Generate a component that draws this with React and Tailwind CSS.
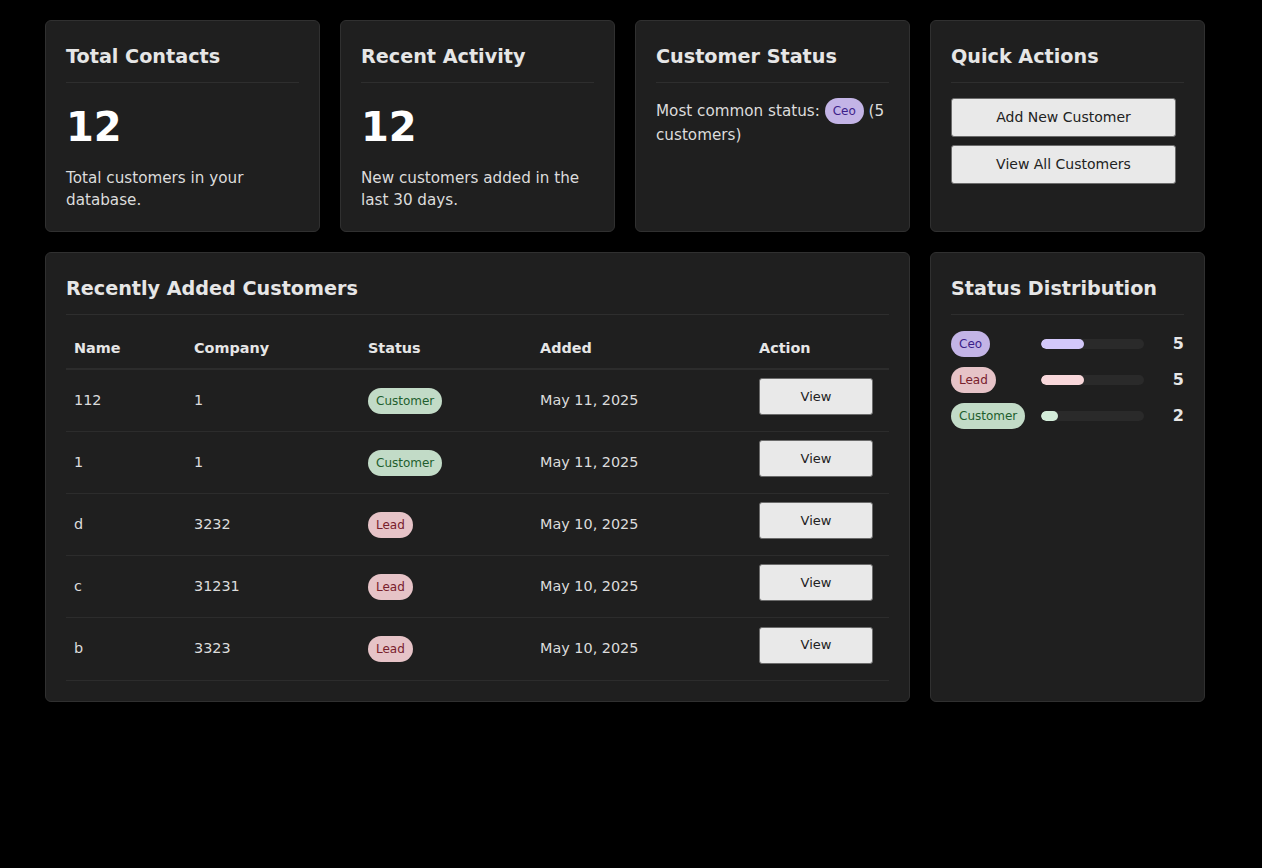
import React from "react";

const font = { fontFamily: '"DejaVu Sans", Verdana, sans-serif' };

const badgeStyles = {
  Ceo: "bg-[#c3b4e6] text-[#3d1f8a]",
  Lead: "bg-[#e6c3c7] text-[#78202c]",
  Customer: "bg-[#c2dbc7] text-[#1f5e2e]",
};
const barStyles = {
  Ceo: "bg-[#d3c8fa]",
  Lead: "bg-[#f8d7da]",
  Customer: "bg-[#d4edda]",
};

function Badge({ s }) {
  return (
    <span
      className={`inline-flex items-center h-[26px] px-2 rounded-full text-[12px] leading-none align-middle ${badgeStyles[s]}`}
    >
      {s}
    </span>
  );
}

function Card({ title, className = "", children }) {
  return (
    <div
      className={`bg-[#1f1f1f] border border-[#303030] rounded-[6px] p-5 ${className}`}
    >
      <h3 className="text-[19.2px] leading-[30px] font-bold text-[#e6e6e6] pt-px pb-[10px] border-b border-[#2e2e2e]">
        {title}
      </h3>
      {children}
    </div>
  );
}

const rows = [
  ["112", "1", "Customer", "May 11, 2025"],
  ["1", "1", "Customer", "May 11, 2025"],
  ["d", "3232", "Lead", "May 10, 2025"],
  ["c", "31231", "Lead", "May 10, 2025"],
  ["b", "3323", "Lead", "May 10, 2025"],
];

const dist = [
  ["Ceo", 5],
  ["Lead", 5],
  ["Customer", 2],
];

const cols = "grid grid-cols-[120px_174px_172px_219px_137px]";

export default function App() {
  return (
    <div className="min-h-[868px] bg-black text-[#e0e0e0]" style={font}>
      <div className="ml-[45px] w-[1160px] pt-5 flex flex-col gap-5">
        <div className="grid grid-cols-4 gap-5">
          <Card title="Total Contacts" className="h-[212px]">
            <div className="mt-5 text-[40px] leading-[48px] font-bold text-white">12</div>
            <p className="mt-[16px] text-[15.2px] leading-[22px] text-[#dcdcdc]">
              Total customers in your database.
            </p>
          </Card>
          <Card title="Recent Activity" className="h-[212px]">
            <div className="mt-5 text-[40px] leading-[48px] font-bold text-white">12</div>
            <p className="mt-[16px] text-[15.2px] leading-[22px] text-[#dcdcdc]">
              New customers added in the last 30 days.
            </p>
          </Card>
          <Card title="Customer Status" className="h-[212px]">
            <p className="mt-[15px] text-[15.2px] leading-[23px] text-[#dcdcdc]">
              Most common status: <Badge s="Ceo" /> (5 customers)
            </p>
          </Card>
          <Card title="Quick Actions" className="h-[212px]">
            <div className="mt-[15px] flex flex-col gap-[8px]">
              <button className="w-[225px] h-[39px] bg-[#e9e9e9] border border-[#6b6b6b] rounded-[3px] text-[14px] text-[#222]">
                Add New Customer
              </button>
              <button className="w-[225px] h-[39px] bg-[#e9e9e9] border border-[#6b6b6b] rounded-[3px] text-[14px] text-[#222]">
                View All Customers
              </button>
            </div>
          </Card>
        </div>

        <div className="grid grid-cols-4 gap-5">
          <Card title="Recently Added Customers" className="col-span-3">
            <div className="mt-[15px] text-[14.4px]">
              <div className={`${cols} h-[40px] items-center border-b-2 border-[#2c2c2c] font-bold text-[#e6e6e6]`}>
                <div className="px-2">Name</div>
                <div className="px-2">Company</div>
                <div className="px-2">Status</div>
                <div className="px-2">Added</div>
                <div className="px-2">Action</div>
              </div>
              {rows.map((r, i) => (
                <div
                  key={i}
                  className={`${cols} ${i === rows.length - 1 ? "h-[63px]" : "h-[62px]"} items-center border-b border-[#2c2c2c] text-[#dcdcdc]`}
                >
                  <div className="px-2">{r[0]}</div>
                  <div className="px-2">{r[1]}</div>
                  <div className="px-2">
                    <Badge s={r[2]} />
                  </div>
                  <div className="px-2">{r[3]}</div>
                  <div className="px-2 flex">
                    <button className="w-[114px] h-[37px] mb-[8px] bg-[#e9e9e9] border border-[#6b6b6b] rounded-[3px] text-[13px] text-[#222]">
                      View
                    </button>
                  </div>
                </div>
              ))}
            </div>
          </Card>
          <Card title="Status Distribution">
            <div className="mt-[16px] flex flex-col gap-[10px]">
              {dist.map(([s, n]) => (
                <div key={s} className="grid grid-cols-[90px_103px_1fr] items-center h-[26px]">
                  <div>
                    <Badge s={s} />
                  </div>
                  <div className="h-[10px] rounded-full bg-[#2a2a2a] overflow-hidden">
                    <div
                      className={`h-full rounded-full ${barStyles[s]}`}
                      style={{ width: `${(n / 12) * 100}%` }}
                    />
                  </div>
                  <div className="text-right text-[16px] font-bold text-[#e6e6e6]">{n}</div>
                </div>
              ))}
            </div>
          </Card>
        </div>
      </div>
    </div>
  );
}
